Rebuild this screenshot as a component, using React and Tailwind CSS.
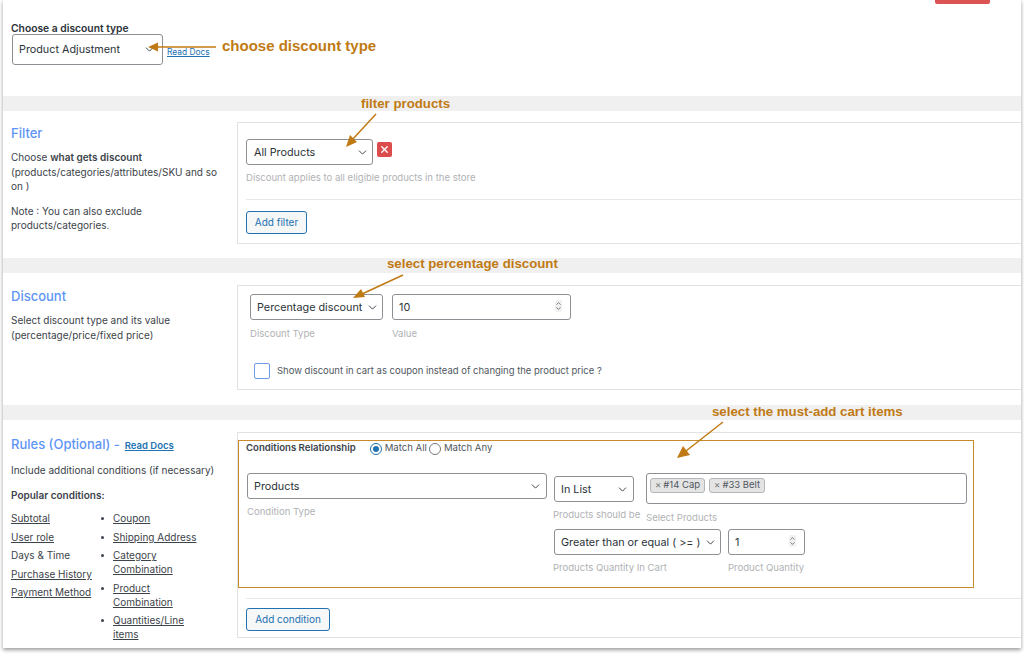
import React from "react";
import { ChevronDown, ChevronUp, X } from "lucide-react";

function Select({ value, className, chevron = "pr-[4px]", indent = "pl-[6px]" }) {
  return (
    <div className={`flex items-center justify-between rounded-[3px] border border-[#8c8f94] bg-white pt-[2px] text-[10.8px] text-[#2c3338] ${indent} ${chevron} ${className}`}>
      <span className="whitespace-nowrap">{value}</span>
      <ChevronDown className="-mt-[2px] size-[13px] shrink-0 text-[#3c434a]" strokeWidth={1.8} />
    </div>
  );
}

function NumberInput({ value, className }) {
  return (
    <div className={`flex items-center justify-between rounded-[3px] border border-[#8c8f94] bg-white pl-[6px] pr-[8px] pt-[2px] text-[10.8px] text-[#2c3338] ${className}`}>
      <span>{value}</span>
      <span className="-mt-[4px] flex flex-col items-center rounded-[2px] bg-[#f0f0f0] text-[#3c434a]">
        <ChevronUp className="-mb-[2px] size-[7px]" strokeWidth={2.2} />
        <ChevronDown className="size-[7px]" strokeWidth={2.2} />
      </span>
    </div>
  );
}

function Hint({ children, className = "" }) {
  return <div className={`whitespace-nowrap text-[9.55px] leading-[12px] text-[#b0b2b5] ${className}`}>{children}</div>;
}

function OutlineButton({ children, className = "" }) {
  return (
    <button className={`flex h-[23px] items-center justify-center rounded-[3px] border border-[#2271b1] bg-[#f6f7f7] text-[10px] text-[#2271b1] ${className}`}>
      {children}
    </button>
  );
}

function Band() {
  return <div className="h-[15px] bg-[#f0f0f0]" />;
}

function Title({ children }) {
  return <h2 className="text-[13px] font-medium leading-[18px] text-[#5e95f5]">{children}</h2>;
}

function Chip({ label }) {
  return (
    <span className="flex h-[15px] items-center rounded-[3px] border border-[#b4b6b8] bg-[#e4e4e4] px-[4px] text-[9.5px] text-[#50575e]">
      <span className="mr-[2px] text-[#777]">×</span>
      {label}
    </span>
  );
}

const leftConditions = [
  { label: "Subtotal", link: true },
  { label: "User role", link: true },
  { label: "Days & Time", link: false },
  { label: "Purchase History", link: true },
  { label: "Payment Method", link: true },
];

const rightConditions = ["Coupon", "Shipping Address", "Category Combination", "Product Combination", "Quantities/Line items"];

export default function App() {
  return (
    <div className="relative h-[655px] w-[1024px] overflow-hidden bg-white font-['Inter',sans-serif] text-[#3c434a]">
      <div className="ml-[3px] h-[648px] w-[1018px] bg-white shadow-[0_2px_4px_rgba(0,0,0,0.4)]">
        {/* Discount type */}
        <section className="h-[96px]">
          <div className="flex h-[4px] justify-end pr-[31px]">
            <div className="h-[4px] w-[55px] rounded-b-[2px] bg-[#dc5353]" />
          </div>
          <div className="pl-[8px] pt-[18px] text-[10.3px] font-semibold leading-[12px] text-[#2c3338]">Choose a discount type</div>
          <div className="flex items-end pl-[9px]">
            <Select value="Product Adjustment" className="h-[31px] w-[151px]" chevron="pr-[6px]" />
            <a className="mb-[8px] ml-[4px] text-[8.4px] leading-[10px] text-[#2271b1] underline">Read Docs</a>
          </div>
        </section>
        <Band />

        {/* Filter */}
        <section className="flex h-[147px] pt-[11px]">
          <div className="w-[234px] pl-[8px] pr-[8px] pt-[2px] text-[10px] leading-[14.6px]">
            <Title>Filter</Title>
            <p className="mt-[8px]">Choose <b className="font-semibold">what gets discount</b> (products/categories/attributes/SKU and so on )</p>
            <p className="mt-[10px]">Note : You can also exclude products/categories.</p>
          </div>
          <div className="h-[122px] flex-1 border-y border-l border-[#e2e2e2] pl-[8px] pt-[16px]">
            <div className="flex items-start">
              <Select value="All Products" className="h-[26px] w-[127px]" chevron="pr-[3px]" indent="pl-[7px]" />
              <span className="ml-[4px] mt-[3px] flex size-[15px] items-center justify-center rounded-[2px] bg-[#dc4c4c] text-white">
                <X className="size-[11px]" strokeWidth={3} />
              </span>
            </div>
            <Hint className="mt-[7px]">Discount applies to all eligible products in the store</Hint>
            <div className="mt-[15px] border-t border-[#e8e8e8]" />
            <OutlineButton className="mt-[11px] w-[61px]">Add filter</OutlineButton>
          </div>
        </section>
        <Band />

        {/* Discount */}
        <section className="flex h-[132px] pt-[12px]">
          <div className="w-[234px] pl-[8px] pr-[8px] pt-[2px] text-[10px] leading-[15px]">
            <Title>Discount</Title>
            <p className="mt-[8px]">Select discount type and its value<br />(percentage/price/fixed price)</p>
          </div>
          <div className="h-[105px] flex-1 border-y border-l border-[#e2e2e2] pl-[12px] pt-[8px]">
            <div className="flex gap-[9px]">
              <div>
                <Select value="Percentage discount" className="h-[26px] w-[133px]" chevron="pr-[3px]" />
                <Hint className="mt-[8px]">Discount Type</Hint>
              </div>
              <div>
                <NumberInput value="10" className="h-[26px] w-[179px]" />
                <Hint className="mt-[8px]">Value</Hint>
              </div>
            </div>
            <div className="mt-[23px] flex items-center pl-[4px]">
              <span className="size-[16px] rounded-[2px] border-[1.5px] border-[#6f9be8] bg-white" />
              <span className="ml-[7px] text-[9.47px] text-[#50575e]">Show discount in cart as coupon instead of changing the product price ?</span>
            </div>
          </div>
        </section>
        <Band />

        {/* Rules */}
        <section className="flex h-[227px] pt-[12px]">
          <div className="w-[234px] pl-[8px] pt-[3px] text-[10px] leading-[14px]">
            <div className="flex items-baseline">
              <Title>Rules (Optional) -</Title>
              <a className="ml-[5px] text-[9.5px] font-semibold text-[#2271b1] underline">Read Docs</a>
            </div>
            <p className="mt-[10px]">Include additional conditions (if necessary)</p>
            <p className="mt-[11px] font-semibold">Popular conditions:</p>
            <div className="mt-[9px] flex">
              <ul className="w-[88px] shrink-0">
                {leftConditions.map((c) => (
                  <li key={c.label} className={`mb-[4.6px] whitespace-nowrap ${c.link ? "underline" : ""}`}>{c.label}</li>
                ))}
              </ul>
              <ul className="w-[104px] pl-[14px]">
                {rightConditions.map((c) => (
                  <li key={c} className="relative mb-[4.6px] underline">
                    <span className="absolute -left-[12px] top-[6px] size-[3px] rounded-full bg-[#3c434a]" />
                    {c === "Shipping Address" ? <span className="whitespace-nowrap">{c}</span> : c}
                  </li>
                ))}
              </ul>
            </div>
          </div>
          <div className="h-[206px] flex-1 border-y border-l border-[#e2e2e2] pt-[7px]">
            <div className="h-[148px] w-[736px] border border-[#c98a2b] pl-[8px] pt-[1px]">
              <div className="-ml-[1px] flex h-[13px] items-center text-[9.6px] text-[#50575e]">
                <b className="font-semibold text-[#3c434a]">Conditions Relationship</b>
                <span className="ml-[14px] flex size-[12px] items-center justify-center rounded-full border border-[#2271b1]">
                  <span className="size-[6px] rounded-full bg-[#2271b1]" />
                </span>
                <span className="ml-[3px]">Match All</span>
                <span className="ml-[2px] size-[12px] rounded-full border border-[#777]" />
                <span className="ml-[3px]">Match Any</span>
              </div>
              <div className="mt-[18px] flex">
                <div className="w-[300px]">
                  <Select value="Products" className="h-[26px] w-[300px]" />
                  <Hint className="mt-[7px]">Condition Type</Hint>
                </div>
                <div className="ml-[7px]">
                  <div className="flex">
                    <div className="w-[92px] pt-[3px]">
                      <Select value="In List" className="h-[26px] w-[80px]" />
                      <Hint className="-ml-[1px] mt-[7px]">Products should be</Hint>
                    </div>
                    <div>
                      <div className="flex h-[31px] w-[321px] items-start gap-[4px] rounded-[3px] border border-[#8c8f94] bg-white pl-[3px] pt-[4px]">
                        <Chip label="#14 Cap" />
                        <Chip label="#33 Belt" />
                      </div>
                      <Hint className="mt-[8px]">Select Products</Hint>
                    </div>
                  </div>
                  <div className="mt-[5px] flex gap-[7px]">
                    <div>
                      <Select value="Greater than or equal ( >= )" className="h-[26px] w-[167px]" chevron="pr-[3px]" />
                      <Hint className="-ml-[1px] mt-[7px]">Products Quantity In Cart</Hint>
                    </div>
                    <div>
                      <NumberInput value="1" className="h-[26px] w-[77px]" />
                      <Hint className="mt-[7px]">Product Quantity</Hint>
                    </div>
                  </div>
                </div>
              </div>
            </div>
            <div className="ml-[8px] mt-[10px] border-t border-[#e8e8e8]" />
            <OutlineButton className="ml-[8px] mt-[9px] w-[84px]">Add condition</OutlineButton>
          </div>
        </section>
      </div>

      {/* Annotations over the page */}
      <span className="absolute left-[222px] top-[37px] font-['Liberation_Sans',sans-serif] text-[15px] font-bold leading-[18px] text-[#c07a14]">choose discount type</span>
      <span className="absolute left-[361px] top-[96px] font-['Liberation_Sans',sans-serif] text-[13.25px] font-bold leading-[16px] text-[#c07a14]">filter products</span>
      <span className="absolute left-[387px] top-[256px] font-['Liberation_Sans',sans-serif] text-[13.25px] font-bold leading-[16px] text-[#c07a14]">select percentage discount</span>
      <span className="absolute left-[712px] top-[404px] font-['Liberation_Sans',sans-serif] text-[13.25px] font-bold leading-[16px] text-[#c07a14]">select the must-add cart items</span>
      <svg className="pointer-events-none absolute left-0 top-0" width="1024" height="655" fill="none">
        <g stroke="#c07a14" strokeWidth="1.5">
          <path d="M216 47H156" />
          <path d="M376 114L352 140" />
          <path d="M403 275L362 294" />
          <path d="M723 422L686 451" />
        </g>
        <g fill="#c07a14">
          <path d="M148 47L158 42.5V51.5Z" />
          <path d="M346 147L350 135L357 142Z" />
          <path d="M353 298L361 289L365 297Z" />
          <path d="M677 458L683 446L690 455Z" />
        </g>
      </svg>
    </div>
  );
}
